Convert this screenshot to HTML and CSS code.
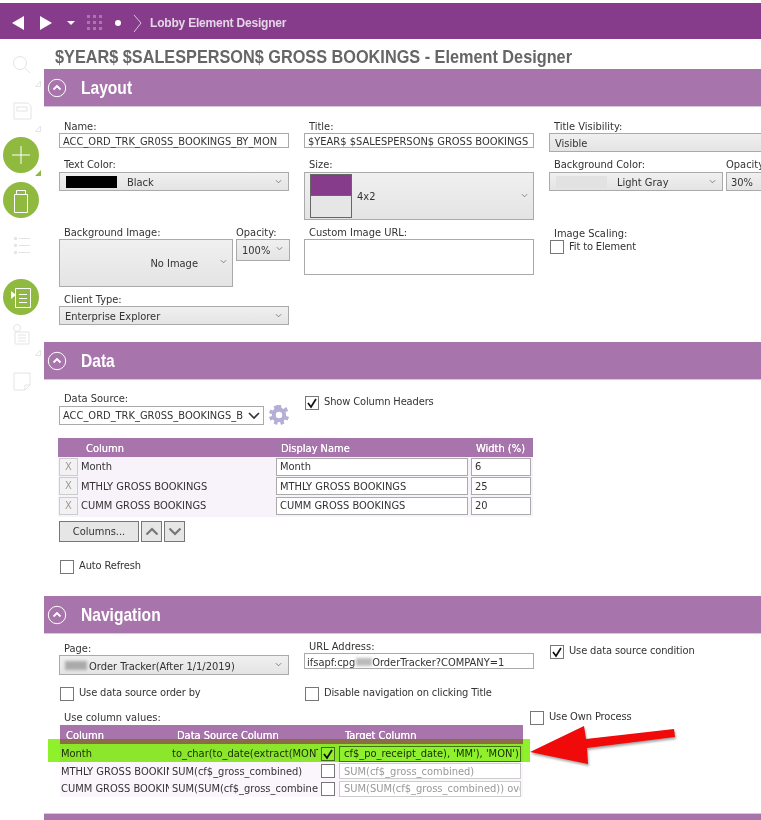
FILE: index.html
```html
<!DOCTYPE html>
<html lang="en">
<head>
<meta charset="utf-8">
<title>Lobby Element Designer</title>
<link rel="stylesheet" href="styles.css">
</head>
<body>
<header class="topbar">
  <svg class="nav-icons" width="142" height="36" viewBox="0 0 142 36">
    <path d="M12 20 24 13V27Z" fill="#fff"/>
    <path d="M40 13 52 20 40 27Z" fill="#fff"/>
    <path d="M67 18H75L71 22Z" fill="#fff"/>
    <g fill="#a877ac"><rect x="87" y="12" width="3" height="3"/><rect x="93" y="12" width="3" height="3"/><rect x="99" y="12" width="3" height="3"/><rect x="87" y="18" width="3" height="3"/><rect x="93" y="18" width="3" height="3"/><rect x="99" y="18" width="3" height="3"/><rect x="87" y="24" width="3" height="3"/><rect x="93" y="24" width="3" height="3"/><rect x="99" y="24" width="3" height="3"/></g>
    <circle cx="118" cy="20" r="3" fill="#fff"/>
    <path d="M134 12 141 20 134 29" fill="none" stroke="#d9c3db" stroke-width="1"/>
  </svg>
  <span class="crumb">Lobby Element Designer</span>
</header>
<div class="shell">
  <aside class="sidebar">
    <svg class="rail" width="44" height="360" viewBox="0 0 44 360">
      <g fill="none" stroke="#e4e4e4" stroke-width="1">
        <circle cx="20" cy="24" r="6.500"/><path d="M25 29 30 34"/>
        <path d="M14 64H28L31 67V80H14Z"/><rect x="17" y="68" width="10" height="4"/>
        <path d="M18.500 199.500H30M18.500 206.500H30M18.500 213.500H30"/>
        <path d="M15 293H29V305H15Z"/><path d="M18 296H26M18 299H26M18 302H26"/><circle cx="17" cy="289" r="3.500" fill="#fff"/>
        <path d="M14 334H30V346L25 351H14Z"/><path d="M30 346H25V351"/>
      </g>
      <g fill="#e6e6e6"><rect x="14" y="198" width="3" height="3"/><rect x="14" y="205" width="3" height="3"/><rect x="14" y="212" width="3" height="3"/></g>
      <g fill="#fff" stroke="#e4e4e4"><path d="M35.500 47.500 40.500 42V47.500Z"/><path d="M35.500 92.500 40.500 87V92.500Z"/><path d="M35.500 316.500 40.500 311V316.500Z"/></g>
      <circle cx="21" cy="116" r="18" fill="#8fb93f"/>
      <path d="M21 107V125M12 116H30" stroke="#fff" stroke-width="1"/>
      <path d="M35 137 41 131V137Z" fill="#8fb93f"/>
      <circle cx="21" cy="161" r="18" fill="#8fb93f"/>
      <path d="M14.500 155.500H27.500V173.500H14.500ZM16.500 151.500H25.500V155.500H16.500Z" fill="none" stroke="#fff"/>
      <circle cx="21" cy="258" r="18" fill="#8fb93f"/>
      <path d="M15.500 249.500H30.500V268.500H15.500ZM19 255.500H27M19 259.500H27M19 263.500H27" fill="none" stroke="#fff"/>
      <path d="M11 252 16 256 11 260Z" fill="#fff"/>
    </svg>
  </aside>
  <main class="main">
    <h1 class="page-title"><span class="squeeze">$YEAR$ $SALESPERSON$ GROSS BOOKINGS - Element Designer</span></h1>

    <section>
      <h2 class="sec-head"><svg class="toggle" width="20" height="20" viewBox="0 0 20 20"><circle cx="10" cy="10" r="8.700" fill="none" stroke="#fff"/><path d="M6.500 11.500 10 8 13.500 11.500" fill="none" stroke="#fff" stroke-width="1.800"/></svg><span class="squeeze">Layout</span></h2>
      <div class="sec-body layout-body">
        <div class="col">
          <label class="lbl">Name:</label>
          <div class="input h15">ACC_ORD_TRK_GR0SS_BOOKINGS_BY_MON</div>
          <label class="lbl mt10">Text Color:</label>
          <div class="select h19"><span class="swatch black"></span><span class="sel-txt ind">Black</span><svg class="chev" width="7" height="5" viewBox="0 0 8 5"><path d="M1 1 4 4 7 1" fill="none" stroke="#777"/></svg></div>
          <div class="pair">
            <div class="w174">
              <label class="lbl">Background Image:</label>
              <div class="select h48 right"><span class="sel-txt">No Image</span><svg class="chev" width="7" height="5" viewBox="0 0 8 5"><path d="M1 1 4 4 7 1" fill="none" stroke="#777"/></svg></div>
            </div>
            <div class="w54">
              <label class="lbl tight">Opacity:</label>
              <div class="select h22"><span class="sel-txt">100%</span><svg class="chev" width="7" height="5" viewBox="0 0 8 5"><path d="M1 1 4 4 7 1" fill="none" stroke="#777"/></svg></div>
            </div>
          </div>
          <label class="lbl mt6">Client Type:</label>
          <div class="select h19"><span class="sel-txt">Enterprise Explorer</span><svg class="chev" width="7" height="5" viewBox="0 0 8 5"><path d="M1 1 4 4 7 1" fill="none" stroke="#777"/></svg></div>
        </div>
        <div class="col">
          <label class="lbl">Title:</label>
          <div class="input h15">$YEAR$ $SALESPERSON$ GROSS BOOKINGS</div>
          <label class="lbl mt10">Size:</label>
          <div class="select h48 size"><span class="tile"><i></i></span><span class="sel-txt">4x2</span><svg class="chev" width="7" height="5" viewBox="0 0 8 5"><path d="M1 1 4 4 7 1" fill="none" stroke="#777"/></svg></div>
          <label class="lbl mt6">Custom Image URL:</label>
          <div class="input h36"></div>
        </div>
        <div class="col col3">
          <label class="lbl">Title Visibility:</label>
          <div class="select h19 bleed"><span class="sel-txt">Visible</span></div>
          <div class="pair bg-row">
            <div class="w174">
              <label class="lbl">Background Color:</label>
              <div class="select h19"><span class="swatch gray"></span><span class="sel-txt ind">Light Gray</span><svg class="chev" width="7" height="5" viewBox="0 0 8 5"><path d="M1 1 4 4 7 1" fill="none" stroke="#777"/></svg></div>
            </div>
            <div class="w54">
              <label class="lbl tight">Opacity:</label>
              <div class="select h19 pct"><span class="sel-txt">30%</span></div>
            </div>
          </div>
          <label class="lbl scaling">Image Scaling:</label>
          <div class="check-row fit"><span class="cb"></span><span>Fit to Element</span></div>
        </div>
      </div>
    </section>

    <section>
      <h2 class="sec-head"><svg class="toggle" width="20" height="20" viewBox="0 0 20 20"><circle cx="10" cy="10" r="8.700" fill="none" stroke="#fff"/><path d="M6.500 11.500 10 8 13.500 11.500" fill="none" stroke="#fff" stroke-width="1.800"/></svg><span class="squeeze">Data</span></h2>
      <div class="sec-body data-body">
        <div class="ds-row">
          <div class="ds-col">
            <label class="lbl">Data Source:</label>
            <div class="ds-line">
              <div class="select h19 plain"><span class="sel-txt clip">ACC_ORD_TRK_GR0SS_BOOKINGS_B</span><svg class="chev-big" width="12" height="8" viewBox="0 0 12 8"><path d="M1 1 6 6 11 1" fill="none" stroke="#333" stroke-width="1.600"/></svg></div>
              <svg class="gear" width="20" height="20" viewBox="0 0 20 20"><path fill="#b5aed6" fill-rule="evenodd" d="M8 0H12L12.500 3 14.600 3.900 17.100 2.100 17.900 2.900 19.100 6 16.400 7 17 9V11L20 12 18.600 15.400 16 14.600 14.600 16.100 15.400 18.600 12 20 11 17H9L8 20 4.600 18.600 5.400 16 3.900 14.600 1.400 15.400 0 12 3 11V9L0 8 1.400 4.600 3.900 5.400 5.400 3.900 4.600 1.400 8 0ZM10 6.800A3.200 3.200 0 1 0 10 13.200 3.200 3.200 0 0 0 10 6.800Z"/></svg>
            </div>
          </div>
          <div class="check-row show"><span class="cb"><svg width="12" height="12" viewBox="0 0 12 12"><path d="M2 6 5 10 10 2" fill="none" stroke="#111" stroke-width="1.700"/></svg></span><span>Show Column Headers</span></div>
        </div>
        <div class="dtable">
          <div class="dhead"><span class="dh1">Column</span><span class="dh2">Display Name</span><span class="dh3">Width (%)</span></div>
          <div class="drow"><span class="xbtn">X</span><span class="dname">Month</span><span class="input dn">Month</span><span class="input dw">6</span></div>
          <div class="drow"><span class="xbtn">X</span><span class="dname">MTHLY GROSS BOOKINGS</span><span class="input dn">MTHLY GROSS BOOKINGS</span><span class="input dw">25</span></div>
          <div class="drow"><span class="xbtn">X</span><span class="dname">CUMM GROSS BOOKINGS</span><span class="input dn">CUMM GROSS BOOKINGS</span><span class="input dw">20</span></div>
        </div>
        <div class="btn-row">
          <span class="btn cols-btn">Columns...</span>
          <span class="btn arrow-btn"><svg width="14" height="9" viewBox="0 0 14 9"><path d="M1.500 7.500 7 2 12.500 7.500" fill="none" stroke="#777" stroke-width="2.200"/></svg></span>
          <span class="btn arrow-btn"><svg width="14" height="9" viewBox="0 0 14 9"><path d="M1.500 1.500 7 7 12.500 1.500" fill="none" stroke="#777" stroke-width="2.200"/></svg></span>
        </div>
        <div class="check-row auto"><span class="cb"></span><span>Auto Refresh</span></div>
      </div>
    </section>

    <section>
      <h2 class="sec-head"><svg class="toggle" width="20" height="20" viewBox="0 0 20 20"><circle cx="10" cy="10" r="8.700" fill="none" stroke="#fff"/><path d="M6.500 11.500 10 8 13.500 11.500" fill="none" stroke="#fff" stroke-width="1.800"/></svg><span class="squeeze">Navigation</span></h2>
      <div class="sec-body nav-body">
        <div class="nav-top">
          <div class="col page-col">
            <label class="lbl">Page:</label>
            <div class="select h20"><span class="smudge"></span><span class="sel-txt">Order Tracker(After 1/1/2019)</span><svg class="chev" width="7" height="5" viewBox="0 0 8 5"><path d="M1 1 4 4 7 1" fill="none" stroke="#777"/></svg></div>
          </div>
          <div class="col">
            <label class="lbl">URL Address:</label>
            <div class="input h16 url">ifsapf:cpg<span class="smudge small"></span>OrderTracker?COMPANY=1</div>
          </div>
          <div class="check-row cond"><span class="cb"><svg width="12" height="12" viewBox="0 0 12 12"><path d="M2 6 5 10 10 2" fill="none" stroke="#111" stroke-width="1.700"/></svg></span><span>Use data source condition</span></div>
        </div>
        <div class="nav-checks">
          <div class="check-row"><span class="cb"></span><span>Use data source order by</span></div>
          <div class="check-row"><span class="cb"></span><span>Disable navigation on clicking Title</span></div>
        </div>
        <div class="nav-use">
          <label class="lbl use-lbl">Use column values:</label>
          <div class="check-row"><span class="cb"></span><span>Use Own Process</span></div>
        </div>
        <div class="ntable">
          <div class="nhead"><span>Column</span><span>Data Source Column</span><span>Target Column</span></div>
          <div class="nrow"><span class="nc1">Month</span><span class="nc2">to_char(to_date(extract(MONTH</span><span class="cb"><svg width="12" height="12" viewBox="0 0 12 12"><path d="M2 6 5 10 10 2" fill="none" stroke="#111" stroke-width="1.700"/></svg></span><span class="input ni">cf$_po_receipt_date), 'MM'), 'MON')</span></div>
          <div class="nrow"><span class="nc1">MTHLY GROSS BOOKINGS</span><span class="nc2">SUM(cf$_gross_combined)</span><span class="cb"></span><span class="input ni dim">SUM(cf$_gross_combined)</span></div>
          <div class="nrow"><span class="nc1">CUMM GROSS BOOKINGS</span><span class="nc2">SUM(SUM(cf$_gross_combined)) over</span><span class="cb"></span><span class="input ni dim">SUM(SUM(cf$_gross_combined)) over</span></div>
          <div class="hl"></div>
          <div class="hl-strip"></div>
          <svg class="red-arrow" width="160" height="50" viewBox="0 0 160 50"><path d="M1 27 55 1 57 14 145 4 146 12 58 23 59 39Z" fill="#f00a0a"/></svg>
        </div>
      </div>
    </section>
    <section><div class="sec-foot"></div></section>
  </main>
</div>
</body>
</html>
```

FILE: styles.css
```css
* { box-sizing: border-box; }
html, body { margin: 0; height: 820px; overflow: hidden; background: #fff; }
body { width: 761px; font: 11px/13px "DejaVu Sans Condensed", "DejaVu Sans", sans-serif; font-stretch: condensed; color: #333; padding-top: 3px; }
.topbar { height: 36px; background: #863c8b; display: flex; align-items: center; }
.nav-icons { flex: none; }
.crumb { margin-left: 8px; font: bold 12px/16px "Liberation Sans", sans-serif; letter-spacing: -.2px; color: #e4d6e6; position: relative; top: 2px; }
.shell { display: flex; }
.sidebar { width: 44px; flex: none; }
.rail { display: block; }
.main { flex: 1; min-width: 0; }
.page-title { margin: 0; height: 30px; padding: 8px 0 0 11px; font: bold 19px/20px "Liberation Sans", sans-serif; color: #666; white-space: nowrap; }
.squeeze { display: inline-block; transform: scaleX(.856); transform-origin: 0 50%; }
.sec-head { margin: 0; height: 38px; background: #a775ab; border-bottom: 1px solid #d9c6dc; display: flex; align-items: center; padding-left: 3px; font: bold 19px/20px "Liberation Sans", sans-serif; color: #fff; }
.sec-head .squeeze { transform: scaleX(.82); padding-top: 1px; }
.toggle { margin-right: 14px; flex: none; }
.sec-body { padding-left: 15px; overflow: hidden; }
.lbl { display: block; height: 13px; padding-left: 5px; white-space: nowrap; }
.input, .select { display: flex; align-items: center; border: 1px solid #aaa; padding: 0 3px; white-space: nowrap; overflow: hidden; background: #fff; }
.select { background: linear-gradient(#f0f0f0, #e4e4e4); position: relative; padding: 0 5px; }
.sel-txt { position: relative; top: 1px; }
.h15 { height: 15px; padding-top: 2px; overflow: visible; } .h16 { height: 16px; padding-top: 2px; } .h19 { height: 19px; } .h20 { height: 20px; } .h22 { height: 22px; } .h36 { height: 36px; } .h48 { height: 48px; }
.h22 .sel-txt, .size .sel-txt { top: 0; }
.mt10 { margin-top: 10px; height: 14px; } .mt6 { margin-top: 6px; }
.chev { position: absolute; right: 6px; top: 6px; }
.layout-body { height: 235px; padding-top: 13px; display: flex; gap: 15px; }
.col { width: 230px; flex: none; }
.bleed { margin-right: -20px; }
.pair { display: flex; gap: 3px; margin-top: 35px; }
.bg-row { margin-top: 6px; width: 240px; }
.bg-row .lbl { height: 14px; }
.w174 { width: 174px; flex: none; } .w54 { width: 54px; flex: none; }
.tight { padding-left: 0; }
.right { justify-content: flex-end; padding-right: 34px; padding-bottom: 2px; }
.right .chev { top: 19px; right: 5px; }
.pct { padding-left: 4px; }
.ind { margin-left: 10px; }
.swatch { width: 51px; height: 12px; flex: none; margin-left: 1px; }
.swatch.black { background: #000; }
.swatch.gray { background: #e2e2e2; }
.size { padding: 0 5px; gap: 5px; }
.size .chev { top: 20px; right: 5px; }
.tile { width: 42px; height: 44px; background: #e6e6e6; border: 1px solid #666; flex: none; display: block; }
.tile i { display: block; height: 21px; background: #863c8b; border-bottom: 1px solid #666; }
.scaling { margin-top: 37px; height: 12px; line-height: 12px; }
.check-row { display: flex; align-items: flex-start; gap: 5px; white-space: nowrap; letter-spacing: -.13px; }
.cb { width: 14px; height: 14px; border: 1px solid #777; background: #fff; display: inline-flex; align-items: center; justify-content: center; flex: none; }
.fit { margin-left: 1px; }
.check-row > span:last-child:not(.cb) { position: relative; top: -1px; }
.fit > span:last-child:not(.cb) { top: 0; }
.data-body { height: 216px; padding-top: 12px; }
.ds-row { display: flex; }
.ds-col { width: 246px; }
.ds-line { display: flex; align-items: center; gap: 5px; }
.plain { width: 205px; background: #fff; padding-left: 3px; }
.clip { overflow: hidden; width: 184px; top: 0; }
.chev-big { position: absolute; right: 3px; top: 5px; }
.gear { flex: none; }
.show { margin-top: 4px; }
.dtable { width: 475px; margin: 13px 0 0 -1px; background: #f8f2fa; padding-bottom: 1px; }
.dhead { height: 19px; background: #a775ab; color: #fff; display: flex; line-height: 22px; text-shadow: 0 0 .6px #fff; }
.dh1 { margin-left: 28px; width: 195px; } .dh2 { width: 195px; }
.drow { display: flex; align-items: center; height: 19.500px; padding-left: 1px; }
.xbtn { width: 19px; height: 18px; border: 1px solid #ccc; background: #f2f2f2; color: #999; text-align: center; line-height: 16px; flex: none; }
.dname { width: 195px; padding-left: 3px; flex: none; white-space: nowrap; }
.dn { width: 192px; height: 18px; margin-left: 3px; }
.dw { width: 60px; height: 18px; margin-left: 3px; }
.btn-row { display: flex; gap: 2px; margin-top: 4px; }
.btn { height: 21px; border: 1px solid #777; background: #e6e6e6; display: flex; align-items: center; justify-content: center; }
.cols-btn { width: 80px; }
.arrow-btn { width: 21px; }
.auto { margin: 18px 0 0 1px; }
.nav-body { height: 179px; padding-top: 6px; }
.nav-top { display: flex; gap: 15px; }
.page-col { padding-top: 2px; }
.smudge { display: inline-block; width: 22px; height: 9px; background: #aaa; filter: blur(1.5px); flex: none; margin: 0 2px 0 0; }
.smudge.small { width: 16px; height: 8px; background: #bbb; margin: 0 0 0 1px; }
.url { padding-left: 2px; }
.cond { margin: 5px 0 0 1px; }
.nav-checks { display: flex; margin: 12px 0 0 1px; gap: 231px; }
.nav-checks .check-row:first-child { width: 14px; }
.nav-use { display: flex; margin-top: 10px; height: 14px; }
.use-lbl { width: 471px; flex: none; }
.ntable { position: relative; width: 463px; margin-left: 1px; background: #faf6fb; }
.nhead { height: 19px; background: #a775ab; color: #fff; display: flex; line-height: 22px; padding-left: 6px; text-shadow: 0 0 .6px #fff; }
.nhead span:first-child { width: 111px; }
.nhead span:nth-child(2) { width: 168px; }
.nrow { height: 17.500px; display: flex; align-items: center; padding: 2px 0 0 1px; }
.nc1 { width: 108px; overflow: hidden; white-space: nowrap; flex: none; }
.nc2 { width: 146px; margin-left: 3px; overflow: hidden; white-space: nowrap; flex: none; }
.nrow .cb { margin-left: 3px; }
.ni { width: 182px; height: 16px; margin-left: 4px; border-color: #ccc; padding-left: 4px; }
.dim { color: #999; }
.nrow:nth-child(2) .ni { border-color: #777; }
.hl { position: absolute; left: -12px; top: 14px; width: 482px; height: 23px; background: #8ff02c; mix-blend-mode: multiply; }
.hl-strip { position: absolute; left: 0; top: 14px; width: 463px; height: 5px; background: #8a6c46; }
.red-arrow { position: absolute; left: 469px; top: 0; filter: drop-shadow(1px 2px 1px rgba(0,0,0,.35)); }
.sec-foot { height: 7px; background: #a775ab; border-top: 1px solid #d9c6dc; }
```
